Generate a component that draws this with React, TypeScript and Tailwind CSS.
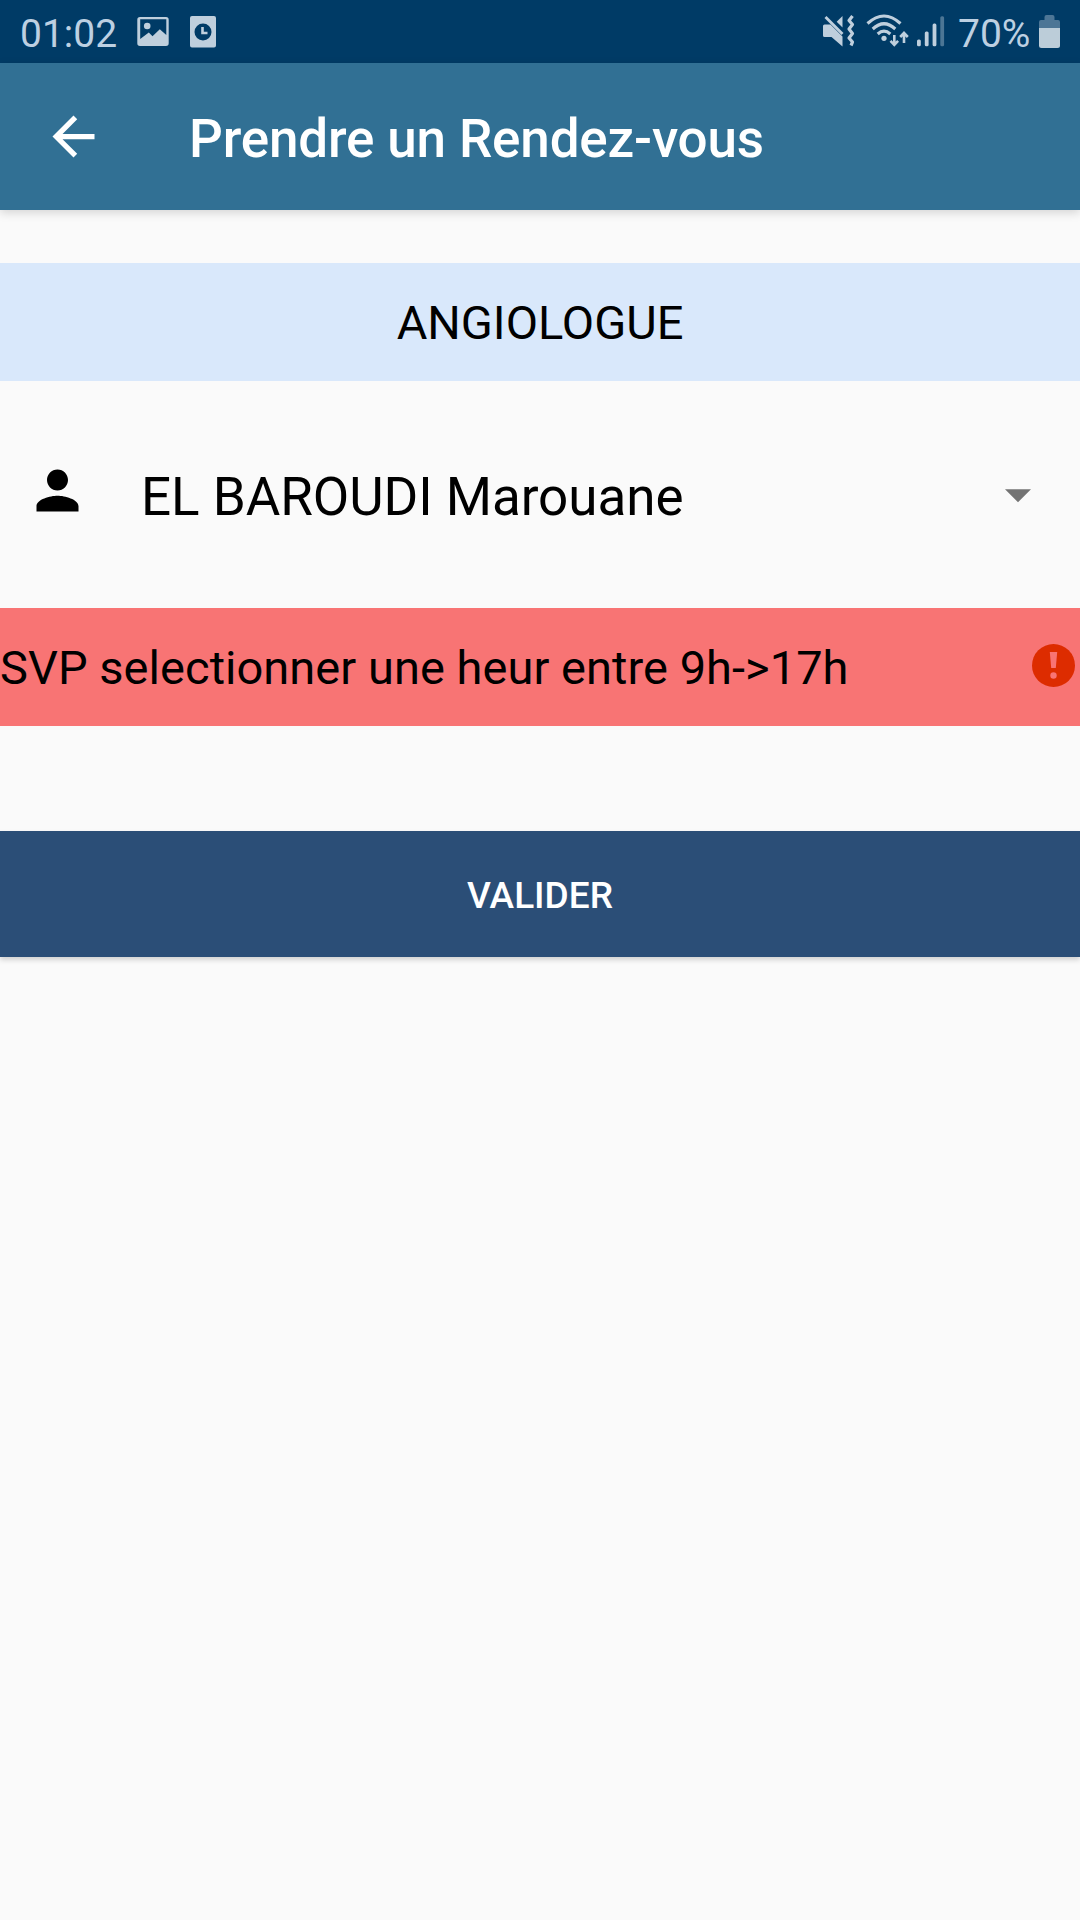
const ICON = "#bfcfdd";

function StatusBar() {
  return (
    <header className="flex h-[63px] items-start bg-[#003b66] text-[39px] leading-[46px] text-[#bdd0e2]">
      <span className="mt-[11px] ml-[20px] w-[112px]">01:02</span>
      <svg className="h-[63px] w-[100px] shrink-0" viewBox="132 0 100 63" fill={ICON}>
        <path fillRule="evenodd" d="M140 17h26a2.7 2.7 0 0 1 2.700 2.700v23.600a2.700 2.700 0 0 1-2.700 2.700h-26a2.700 2.700 0 0 1-2.700-2.700v-23.600a2.700 2.700 0 0 1 2.700-2.700zM140.200 19.300v19.700l8.600-6.500 3.700 3.700 7.300-6.900 6.500 5.700v-15.700z" />
        <circle cx="147.200" cy="26" r="3.300" />
        <path fillRule="evenodd" d="M192 16h22a2 2 0 0 1 2 2v27.500a2 2 0 0 1-2 2h-22a2 2 0 0 1-2-2v-27.500a2 2 0 0 1 2-2zM203 23.500a8.500 8.500 0 1 0 0 17a8.500 8.500 0 1 0 0-17z" />
        <path d="M202.500 27v6h5" fill="none" stroke={ICON} strokeWidth="2.600" />
      </svg>
      <svg className="ml-auto h-[63px] w-[135px] shrink-0" viewBox="815 0 135 63" fill={ICON}>
        <path d="M824.500 24.500h6l12 12v10l-11-9.500h-7q-1.500 0-1.500-1.500v-9.500q0-1.500 1.500-1.500z" />
        <path d="M842.500 16v11.500l-5.800-5.800z" />
        <path d="M825.500 17l17 17" fill="none" stroke={ICON} strokeWidth="2.800" />
        <path d="M852.500 16l-3.500 4.500 3.500 4 -3.500 4.500 3.500 4.500-3.500 4.500 3.500 4-1.500 3.500" fill="none" stroke={ICON} strokeWidth="3.200" strokeLinejoin="round" />
        <g fill="none" stroke={ICON} strokeWidth="3.100">
          <path d="M867.500 23.500q16.500-15 33 0" />
          <path d="M872.700 29q11.300-10.500 22.600 0" />
          <path d="M877.700 34q6.300-5.800 12.600 0" />
        </g>
        <circle cx="884" cy="38.300" r="2.600" />
        <path d="M894.300 35v10M890.500 40.800l3.800 4 3.800-4M904 43v-9.800M900.200 37l3.800-4 3.800 4" fill="none" stroke={ICON} strokeWidth="2.600" />
        <rect x="917" y="39.500" width="3.800" height="6.800" rx="1.500" />
        <rect x="924.800" y="31.500" width="3.800" height="14.800" rx="1.500" />
        <rect x="932.600" y="23.500" width="3.800" height="22.800" rx="1.500" />
        <rect x="940.300" y="16.300" width="3.800" height="30" rx="1.500" fillOpacity=".4" />
      </svg>
      <span className="mt-[11px] ml-[8px] w-[78px]">70%</span>
      <svg className="h-[63px] w-[44px] shrink-0" viewBox="1036 0 44 63">
        <path d="M1039 28v-6q0-2 2-2h3.500v-3q0-2 2-2h6q2 0 2 2v3h3.500q2 0 2 2v6z" fill="#4d7696" />
        <path d="M1039 28h21v17.500q0 2.500-2.500 2.500h-16q-2.500 0-2.500-2.500z" fill="#bccdd9" />
      </svg>
    </header>
  );
}

function AppBar() {
  return (
    <div className="flex h-[147px] items-center bg-[#317094] shadow-[0_3px_9px_rgba(0,0,0,0.15)]">
      <button aria-label="Retour" className="ml-[42px] flex size-[63px] items-center justify-center">
        <svg className="size-[63px]" viewBox="0 0 24 24" fill="#fff">
          <path d="M20 11H7.830l5.590-5.590L12 4l-8 8 8 8 1.410-1.410L7.830 13H20v-2z" />
        </svg>
      </button>
      <h1 className="mt-[5px] ml-[84px] text-[53px] leading-[60px] font-medium tracking-[-0.17px] text-white">
        Prendre un Rendez-vous
      </h1>
    </div>
  );
}

export default function App() {
  return (
    <div className="flex h-[1920px] w-[1080px] flex-col overflow-hidden bg-[#fafafa] font-[Roboto,sans-serif] whitespace-nowrap text-black">
      <StatusBar />
      <AppBar />
      <main className="flex flex-col">
        <div className="mt-[53px] flex h-[118px] items-center justify-center bg-[#d9e8fb] pt-[2px] text-[47px] leading-[56px]">
          ANGIOLOGUE
        </div>
        <div className="flex h-[227px] items-start">
          <svg className="mt-[78px] ml-[26px] size-[63px]" viewBox="0 0 24 24">
            <path d="M12 12c2.210 0 4-1.790 4-4s-1.790-4-4-4-4 1.790-4 4 1.790 4 4 4zm0 2c-2.670 0-8 1.340-8 4v2h16v-2c0-2.660-5.330-4-8-4z" />
          </svg>
          <span className="mt-[86px] ml-[52px] text-[53px] leading-[60px] tracking-[-0.05px]">EL BAROUDI Marouane</span>
          <svg className="mt-[108px] mr-[49.500px] ml-auto h-[13.500px] w-[26px]" viewBox="0 0 26 13.500" fill="#737373">
            <path d="M0 .3h26l-13 13z" />
          </svg>
        </div>
        <div className="flex h-[118px] items-center bg-[#f87474]">
          <span className="pt-[2px] text-[47px] leading-[56px] tracking-[0.04px]">SVP selectionner une heur entre 9h-&gt;17h</span>
          <svg className="mr-[5px] mb-[3px] ml-auto size-[43px]" viewBox="0 0 43 43">
            <circle cx="21.500" cy="21.500" r="21.500" fill="#dd2c00" />
            <path d="M17.800 8h7.400l-1.400 16h-4.600z" fill="#f87474" />
            <circle cx="21.500" cy="31.500" r="3.200" fill="#f87474" />
          </svg>
        </div>
        <button className="mt-[105px] flex h-[126px] items-center justify-center bg-[#2b4e77] pt-[3px] text-[37px] leading-[44px] font-medium text-white shadow-[0_3px_5px_rgba(0,0,0,0.16)]">
          VALIDER
        </button>
      </main>
    </div>
  );
}
